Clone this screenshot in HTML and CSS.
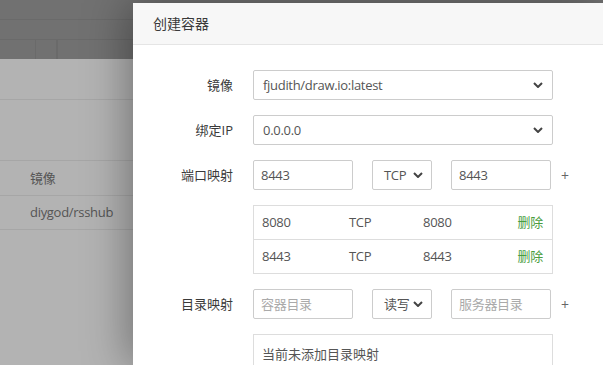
FILE: index.html
```html
<!DOCTYPE html>
<html lang="zh-CN">
  <head>
    <meta charset="UTF-8">
    <title>创建容器</title>
    <link rel="stylesheet" href="styles.css">
  </head>
  <body>
    <div class="page">
      <div class="topbar">
        <div class="topbar-strip"></div>
        <div class="topbar-strip"></div>
        <div class="topbar-tabs">
          <div class="tab tab-first"></div>
          <div class="tab tab-small"></div>
          <div class="tab tab-wide"></div>
        </div>
      </div>
      <div class="toolbar"></div>
      <div class="list">
        <div class="list-row list-head">镜像</div>
        <div class="list-row">diygod/rsshub</div>
      </div>
    </div>

    <div class="drawer">
      <div class="drawer-head">创建容器</div>
      <div class="form">
        <label class="label">镜像</label>
        <div class="control select select-full">
          <span>fjudith/draw.io:latest</span>
          <svg class="chevron" viewBox="0 0 10 6" width="10" height="6"><path d="M1 1 L5 5 L9 1" fill="none" stroke="#444" stroke-width="2"/></svg>
        </div>
        <span></span>

        <label class="label">绑定IP</label>
        <div class="control select select-full">
          <span>0.0.0.0</span>
          <svg class="chevron" viewBox="0 0 10 6" width="10" height="6"><path d="M1 1 L5 5 L9 1" fill="none" stroke="#444" stroke-width="2"/></svg>
        </div>
        <span></span>

        <label class="label">端口映射</label>
        <div class="triple">
          <div class="control input">8443</div>
          <div class="control select select-small">
            <span>TCP</span>
            <svg class="chevron" viewBox="0 0 10 6" width="10" height="6"><path d="M1 1 L5 5 L9 1" fill="none" stroke="#444" stroke-width="2"/></svg>
          </div>
          <div class="control input">8443</div>
        </div>
        <span class="plus">+</span>

        <span></span>
        <div class="mapping">
          <div class="mapping-row">
            <span>8080</span><span>TCP</span><span>8080</span><a class="remove">删除</a>
          </div>
          <div class="mapping-row">
            <span>8443</span><span>TCP</span><span>8443</span><a class="remove">删除</a>
          </div>
        </div>
        <span></span>

        <label class="label">目录映射</label>
        <div class="triple">
          <div class="control input placeholder">容器目录</div>
          <div class="control select select-small">
            <span>读写</span>
            <svg class="chevron" viewBox="0 0 10 6" width="10" height="6"><path d="M1 1 L5 5 L9 1" fill="none" stroke="#444" stroke-width="2"/></svg>
          </div>
          <div class="control input placeholder">服务器目录</div>
        </div>
        <span class="plus">+</span>

        <span></span>
        <div class="empty">当前未添加目录映射</div>
        <span></span>
      </div>
    </div>
  </body>
</html>
```

FILE: styles.css
```css
html, body {
  margin: 0;
  height: 100%;
}
body {
  background-color: #b3b3b3;
  font-family: "Open Sans", "Noto Sans CJK SC", sans-serif;
  font-size: 13px;
  font-variant-ligatures: none;
  color: #3a3a3a;
  overflow: hidden;
  position: relative;
}

/* dimmed page behind the drawer */
.topbar {
  background-color: #717171;
  height: 59px;
  display: flex;
  flex-direction: column;
}
.topbar-strip {
  height: 19px;
  border-bottom: 1px solid #6a6a6a;
}
.topbar-tabs {
  display: flex;
  flex-grow: 1;
}
.tab {
  border-right: 1px solid #6a6a6a;
}
.tab-first {
  width: 35px;
}
.tab-small {
  width: 20px;
}
.toolbar {
  height: 40px;
  border-bottom: 1px solid #a6a6a6;
}
.list {
  margin-top: 60px;
  border-top: 1px solid #a6a6a6;
}
.list-row {
  height: 33px;
  line-height: 33px;
  padding-left: 30px;
  color: #555;
  letter-spacing: -.3px;
  border-bottom: 1px solid #a6a6a6;
}
.list-head {
  height: 34px;
  line-height: 34px;
}

/* drawer */
.drawer {
  position: absolute;
  left: 133px;
  top: 3px;
  right: 0;
  bottom: 0;
  background-color: #fff;
  box-shadow: -6px 0 40px rgba(0, 0, 0, .35);
}
.drawer-head {
  height: 41px;
  line-height: 41px;
  padding-left: 20px;
  font-size: 14px;
  background-color: #f7f7f7;
  border-bottom: 1px solid #e5e5e5;
}
.form {
  display: grid;
  grid-template-columns: 80px 300px auto;
  column-gap: 20px;
  row-gap: 15px;
  padding: 25px 0 0 20px;
  align-items: center;
}
.label {
  text-align: right;
  line-height: 30px;
}
.control {
  box-sizing: border-box;
  height: 30px;
  line-height: 28px;
  border: 1px solid #ccc;
  border-radius: 2px;
  color: #555;
  background-color: #fff;
  letter-spacing: -.3px;
}
.select {
  display: flex;
  align-items: center;
  justify-content: space-between;
  padding: 0 9px 0 9px;
}
.select-small {
  width: 60px;
  padding-left: 11px;
  padding-right: 8px;
}
.chevron {
  flex-shrink: 0;
}
.input {
  width: 100px;
  padding-left: 7px;
}
.placeholder {
  color: #aaa;
}
.triple {
  display: flex;
  gap: 19px;
}
.plus {
  color: #666;
  font-size: 14px;
  margin-left: -12px;
}
.mapping {
  border: 1px solid #ddd;
}
.mapping-row {
  display: grid;
  grid-template-columns: 87px 74px 1fr auto;
  height: 33px;
  line-height: 33px;
  padding: 0 9px 0 8px;
  color: #555;
  letter-spacing: -.3px;
}
.mapping-row + .mapping-row {
  border-top: 1px solid #ddd;
}
.remove {
  color: #4a9d3e;
}
.empty {
  box-sizing: border-box;
  height: 45px;
  border: 1px solid #ddd;
  padding: 10px 8px;
  line-height: 18px;
  color: #555;
}
```
